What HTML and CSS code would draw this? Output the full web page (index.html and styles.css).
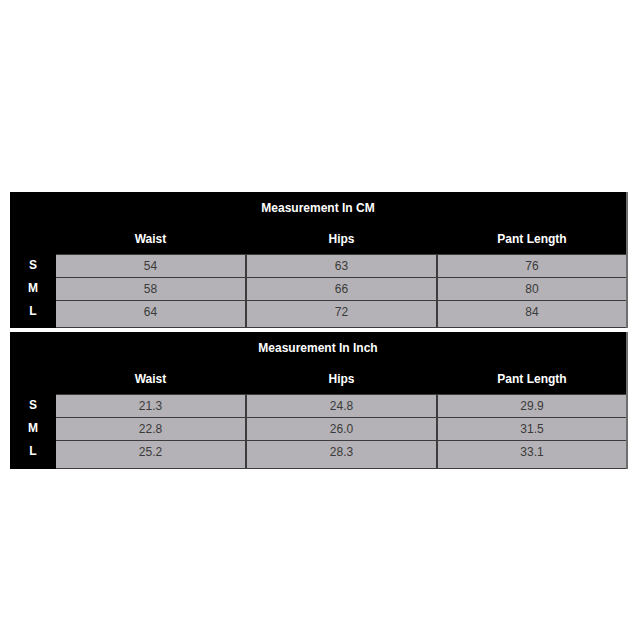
FILE: index.html
```html
<!DOCTYPE html>
<html lang="en">
<head>
<meta charset="utf-8">
<title>Size Chart</title>
<link rel="stylesheet" href="styles.css">
</head>
<body>
<main class="page">
  <section class="size-table">
    <div class="head">
      <div class="title">Measurement In CM</div>
      <div class="cols">
        <span></span><span>Waist</span><span>Hips</span><span>Pant Length</span>
      </div>
    </div>
    <div class="body">
      <div class="row"><span class="lbl">S</span><span class="val">54</span><span class="val">63</span><span class="val">76</span></div>
      <div class="row"><span class="lbl">M</span><span class="val">58</span><span class="val">66</span><span class="val">80</span></div>
      <div class="row last"><span class="lbl">L</span><span class="val">64</span><span class="val">72</span><span class="val">84</span></div>
    </div>
  </section>
  <section class="size-table second">
    <div class="head">
      <div class="title">Measurement In Inch</div>
      <div class="cols">
        <span></span><span>Waist</span><span>Hips</span><span>Pant Length</span>
      </div>
    </div>
    <div class="body">
      <div class="row"><span class="lbl">S</span><span class="val">21.3</span><span class="val">24.8</span><span class="val">29.9</span></div>
      <div class="row"><span class="lbl">M</span><span class="val">22.8</span><span class="val">26.0</span><span class="val">31.5</span></div>
      <div class="row last"><span class="lbl">L</span><span class="val">25.2</span><span class="val">28.3</span><span class="val">33.1</span></div>
    </div>
  </section>
</main>
</body>
</html>
```
FILE: styles.css
```css
html, body {
  margin: 0;
  padding: 0;
  background: #fff;
}
body {
  font-family: "Liberation Sans", Arial, sans-serif;
  font-size: 12px;
}
.page {
  padding: 192px 0 0 10px;
  display: flex;
  flex-direction: column;
  gap: 4px;
}
.size-table {
  width: 616px;
  background: #000;
  border-right: 2px solid #6e6e6e;
}
.head {
  height: 62px;
  color: #fff;
  font-weight: bold;
  display: flex;
  flex-direction: column;
}
.title {
  height: 32px;
  line-height: 32px;
  text-align: center;
}
.cols {
  display: grid;
  grid-template-columns: 46px 191px 191px 188px;
  height: 30px;
  line-height: 30px;
  text-align: center;
}
.cols span:nth-child(2),
.cols span:nth-child(3) {
  padding-right: 2px;
}
.row {
  display: grid;
  grid-template-columns: 46px 191px 191px 188px;
  height: 23px;
}
.row.last {
  height: 28px;
}
.second .row.last {
  height: 29px;
}
.lbl {
  color: #fff;
  font-weight: bold;
  text-align: center;
  line-height: 23px;
}
.val {
  box-sizing: border-box;
  background: #b4b2b6;
  color: #3a3a3a;
  text-align: center;
  border-top: 1px solid #3c3c3c;
  line-height: 22px;
}
.row.last .val {
  border-bottom: 1px solid #3c3c3c;
}
.val:nth-child(2),
.val:nth-child(3) {
  border-right: 2px solid #3c3c3c;
}
```
